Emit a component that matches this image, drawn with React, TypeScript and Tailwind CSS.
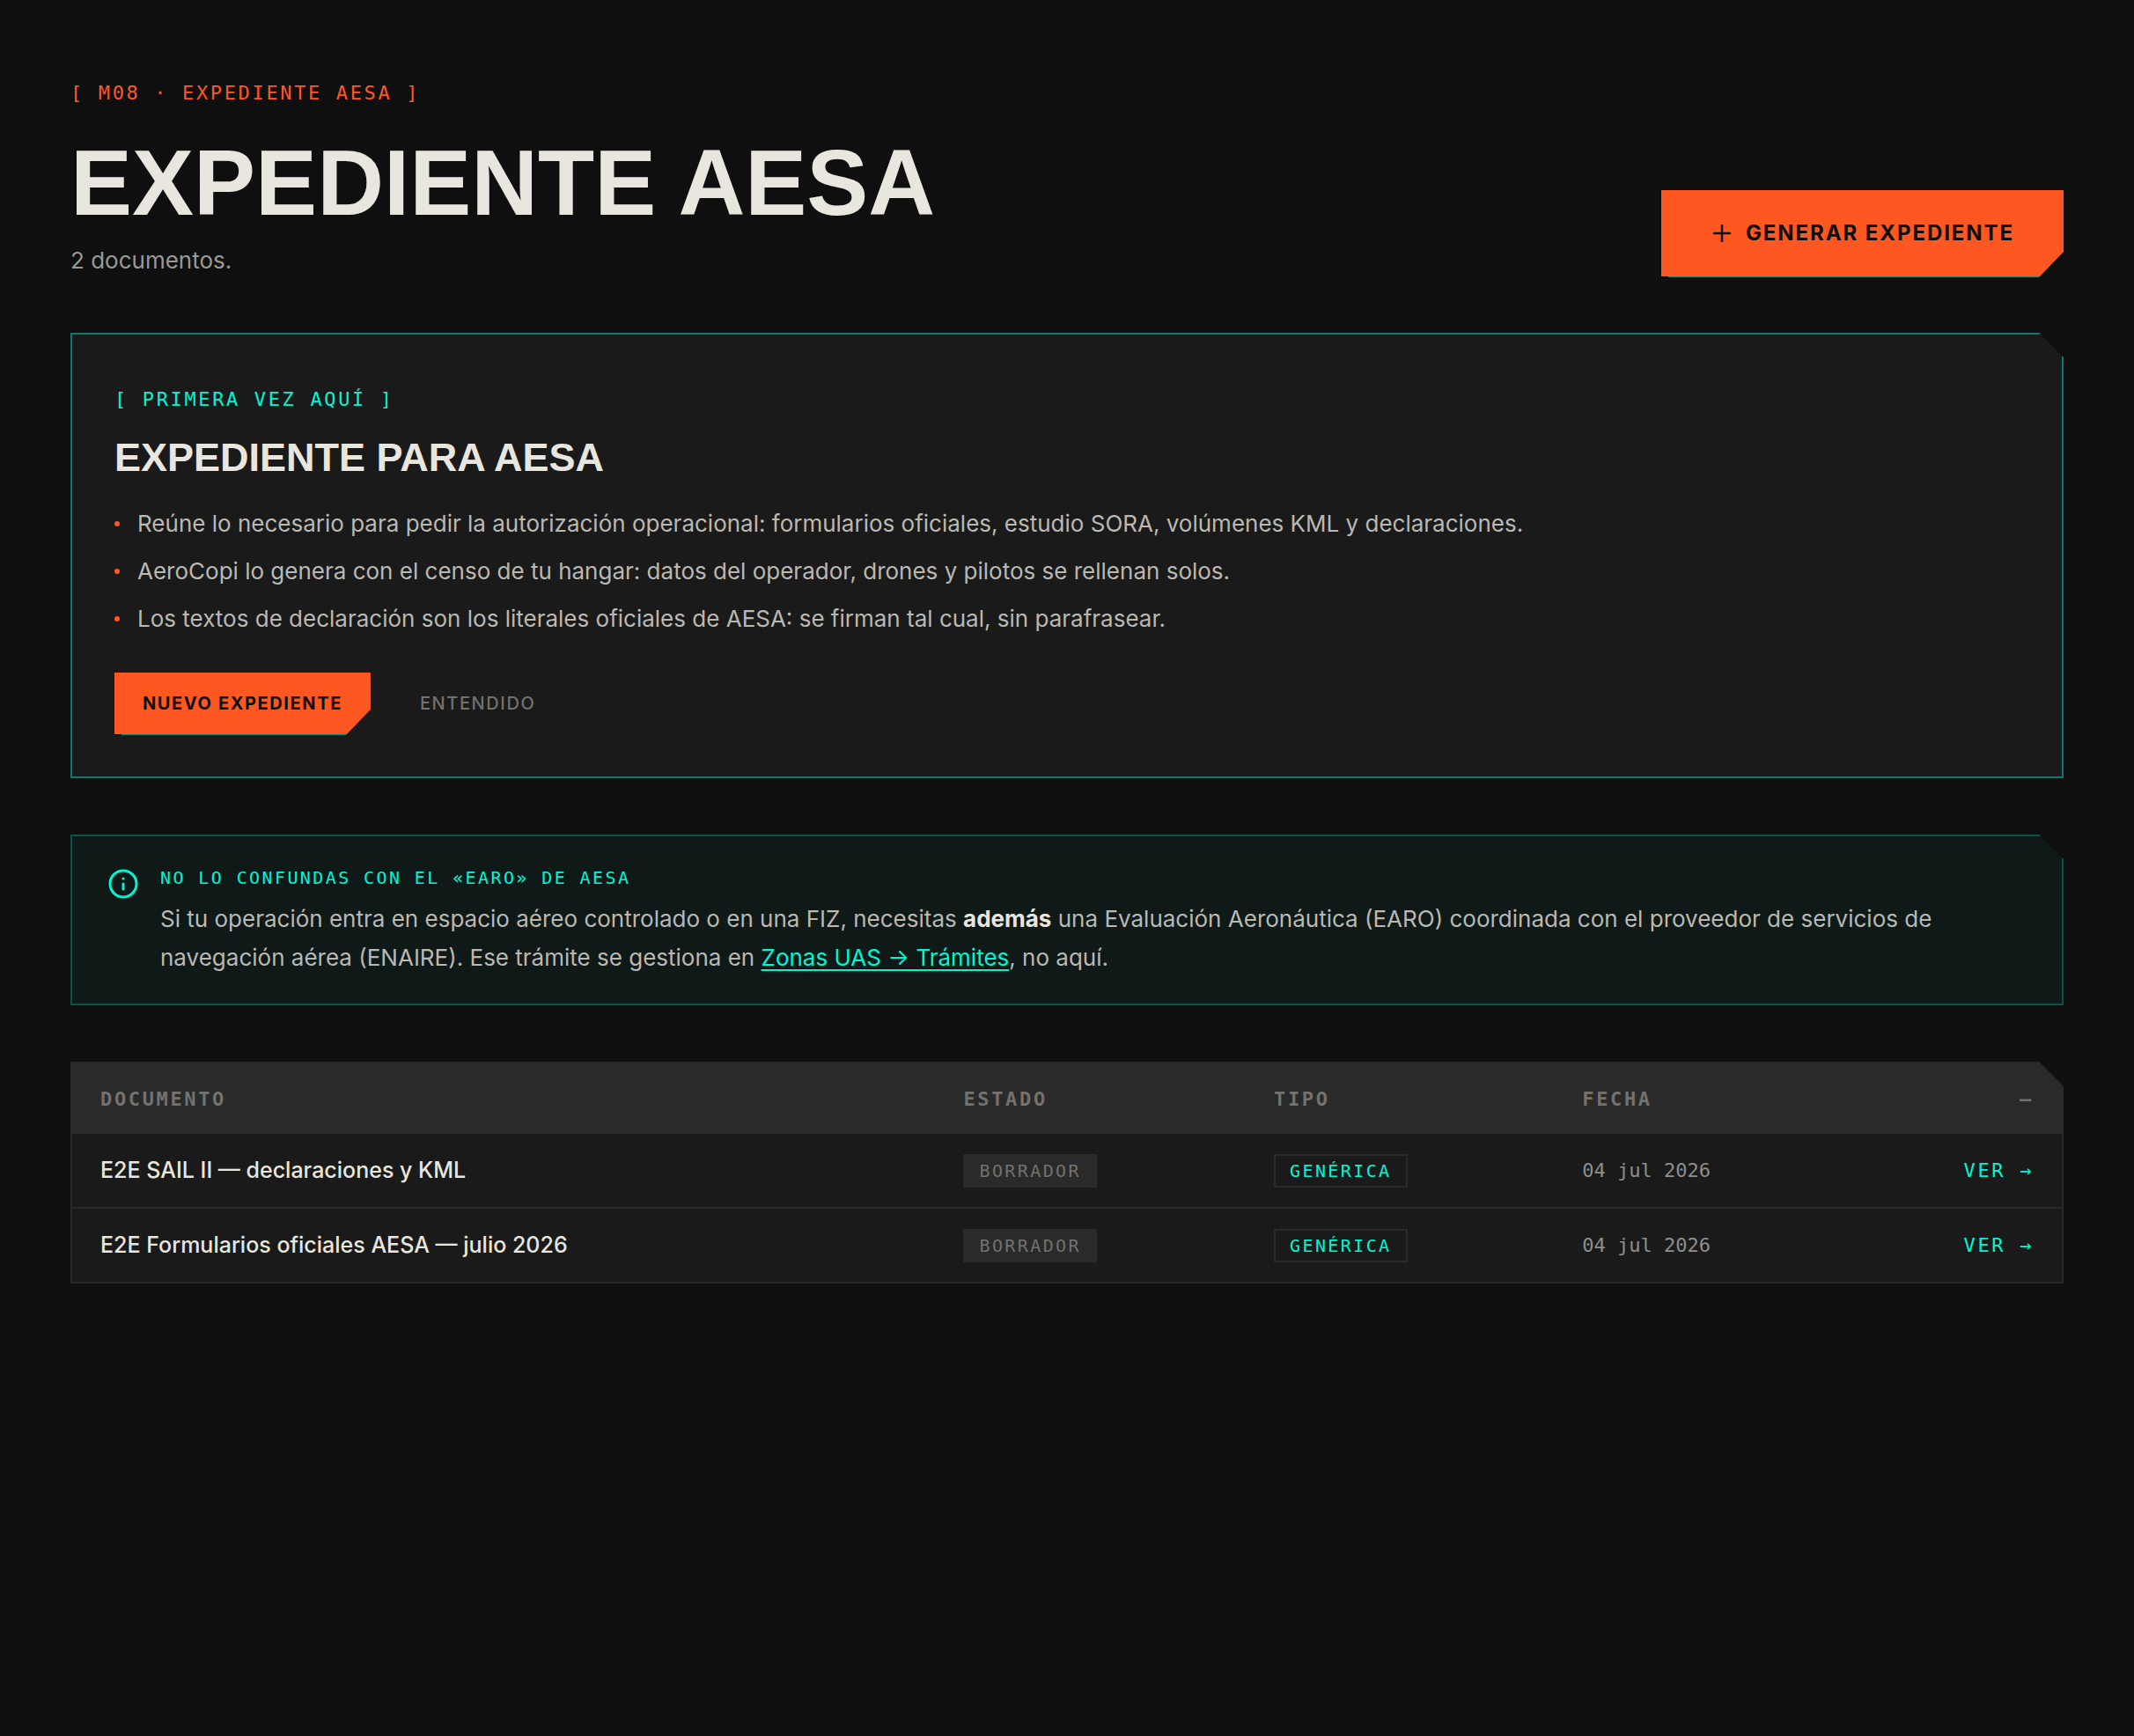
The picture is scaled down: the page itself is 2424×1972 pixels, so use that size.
import React from 'react';
import { Plus, Info } from 'lucide-react';

interface Documento {
  id: number;
  nombre: string;
  estado: string;
  tipo: string;
  fecha: string;
}

const documentos: Documento[] = [
  { id: 1, nombre: 'E2E SAIL II — declaraciones y KML', estado: 'BORRADOR', tipo: 'GENÉRICA', fecha: '04 jul 2026' },
  { id: 2, nombre: 'E2E Formularios oficiales AESA — julio 2026', estado: 'BORRADOR', tipo: 'GENÉRICA', fecha: '04 jul 2026' },
];

const consejos = [
  'Reúne lo necesario para pedir la autorización operacional: formularios oficiales, estudio SORA, volúmenes KML y declaraciones.',
  'AeroCopi lo genera con el censo de tu hangar: datos del operador, drones y pilotos se rellenan solos.',
  'Los textos de declaración son los literales oficiales de AESA: se firman tal cual, sin parafrasear.',
];

const mono = "font-['DejaVu_Sans_Mono',monospace]";
const display = "font-['Liberation_Sans',Arial,sans-serif] font-bold";

// corte diagonal en la esquina superior derecha
const notchTop = '[clip-path:polygon(0_0,calc(100%-28px)_0,100%_28px,100%_100%,0_100%)]';

// corte inferior derecho, deja ver 1px de la sombra
const notchBottom =
  '[clip-path:polygon(0_0,100%_0,100%_calc(100%-28px),calc(100%-28px)_calc(100%+1px),0_calc(100%+1px))] shadow-[8px_8px_0_#0f8878]';

const Header: React.FC = () => (
  <header className="flex items-end justify-between gap-8">
    <div>
      <p className={`${mono} text-[22px] leading-[32px] tracking-[0.12em] text-[#ff5722]`}>[ M08 · EXPEDIENTE AESA ]</p>
      <h1 className={`${display} mt-8 text-[105px] leading-[108px] text-[#e8e6df]`}>EXPEDIENTE AESA</h1>
      <p className="mt-4 text-[26px] leading-[36px] text-[#9a9994]">2 documentos.</p>
    </div>
    <button
      type="button"
      className={`${notchBottom} flex h-[98px] items-center gap-2.5 bg-[#ff5722] pr-14 pl-13 text-[24px] font-bold tracking-[0.08em] text-[#0f0f0f]`}
    >
      <Plus size={34} strokeWidth={1.75} strokeLinecap="butt" />
      GENERAR EXPEDIENTE
    </button>
  </header>
);

const PrimeraVez: React.FC = () => (
  <section className={`${notchTop} mt-16 border-2 border-[#11796a] bg-[#1a1a1a] p-12`}>
    <p className={`${mono} mt-2.5 text-[22px] leading-[32px] tracking-[0.12em] text-[#00f5d4]`}>[ PRIMERA VEZ AQUÍ ]</p>
    <h2 className={`${display} mt-6 text-[45px] leading-[52px] text-[#e8e6df]`}>EXPEDIENTE PARA AESA</h2>
    <ul className="mt-7 flex flex-col gap-3 text-[26px] leading-[42px] text-[#bab8b2]">
      {consejos.map((texto) => (
        <li key={texto} className="flex items-center gap-5">
          <span className="size-1.5 shrink-0 rounded-full bg-[#ff5722]" />
          <span>{texto}</span>
        </li>
      ))}
    </ul>
    <div className="mt-10 flex items-center gap-6 text-[20px] tracking-[0.08em]">
      <button type="button" className={`${notchBottom} h-[70px] bg-[#ff5722] px-8 font-bold text-[#0f0f0f]`}>
        NUEVO EXPEDIENTE
      </button>
      <button type="button" className="h-[70px] px-8 font-medium text-[#73726e]">
        ENTENDIDO
      </button>
    </div>
  </section>
);

const Aviso: React.FC = () => (
  <aside className={`${notchTop} mt-16 flex gap-6 border-2 border-[#0d5248] bg-[#0e1918] px-10 pt-8 pb-[30px]`}>
    <Info size={36} strokeWidth={2} className="mt-1 shrink-0 text-[#00f5d4]" />
    <div>
      <p className={`${mono} text-[20px] leading-[30px] tracking-[0.12em] text-[#00f5d4]`}>NO LO CONFUNDAS CON EL «EARO» DE AESA</p>
      <p className="mt-2.5 text-[26px] leading-[44px] text-[#bab8b2]">
        Si tu operación entra en espacio aéreo controlado o en una FIZ, necesitas{' '}
        <strong className="font-bold text-[#e8e6df]">además</strong> una Evaluación Aeronáutica (EARO) coordinada con el
        proveedor de servicios de navegación aérea (ENAIRE). Ese trámite se gestiona en{' '}
        <a href="#tramites" className="text-[#00f5d4] underline decoration-2 underline-offset-4">
          Zonas UAS → Trámites
        </a>
        , no aquí.
      </p>
    </div>
  </aside>
);

const Tabla: React.FC = () => (
  <div className={`${notchTop} mt-16 border-2 border-[#2a2a2a] bg-[#1a1a1a]`}>
    <table className="w-full table-fixed border-collapse text-left">
      <thead className={`${mono} bg-[#2a2a2a] text-[22px] tracking-[0.12em] text-[#73726e]`}>
        <tr className="h-20">
          <th className="w-[44.8%] pl-8 font-bold">DOCUMENTO</th>
          <th className="w-[15.6%] font-bold">ESTADO</th>
          <th className="w-[15.5%] font-bold">TIPO</th>
          <th className="w-[15.6%] font-bold">FECHA</th>
          <th className="pr-8 text-right font-bold">—</th>
        </tr>
      </thead>
      <tbody>
        {documentos.map((doc) => (
          <tr key={doc.id} className="h-[84px] border-b-2 border-[#2a2a2a] last:border-b-0">
            <td className="pl-8 text-[25px] font-medium text-[#e8e6df]">{doc.nombre}</td>
            <td>
              <span className={`${mono} inline-block border-2 border-[#2a2a2a] bg-[#2a2a2a] px-4 text-[20px] leading-[34px] tracking-[0.12em] text-[#73726e]`}>
                {doc.estado}
              </span>
            </td>
            <td>
              <span className={`${mono} inline-block border-2 border-[#2a2a2a] px-4 text-[20px] leading-[34px] tracking-[0.12em] text-[#00f5d4]`}>
                {doc.tipo}
              </span>
            </td>
            <td className={`${mono} text-[22px] text-[#8f8e89]`}>{doc.fecha}</td>
            <td className="pr-8 text-right">
              <a href={`#doc-${doc.id}`} className={`${mono} text-[22px] tracking-[0.12em] text-[#00f5d4]`}>
                VER →
              </a>
            </td>
          </tr>
        ))}
      </tbody>
    </table>
  </div>
);

const App: React.FC = () => {
  return (
    <main className="min-h-screen bg-[#0f0f0f] px-20 pt-[90px] pb-20 font-['Inter',sans-serif]">
      <Header />
      <PrimeraVez />
      <Aviso />
      <Tabla />
    </main>
  );
};

export default App;
